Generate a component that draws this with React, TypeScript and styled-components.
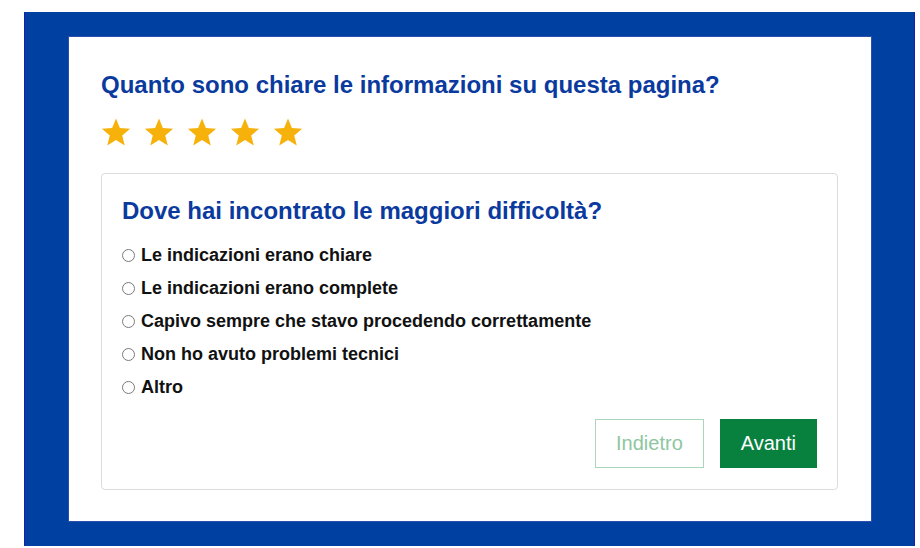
import React, { useState } from 'react';
import styled, { createGlobalStyle } from 'styled-components';

const GlobalStyle = createGlobalStyle`
  body {
    margin: 0;
    background: #ffffff;
    font-family: 'Liberation Sans', Arial, sans-serif;
  }
`;

const Page = styled.div`
  padding: 12px 0 0 24px;
`;

const Frame = styled.section`
  box-sizing: border-box;
  width: 891px;
  height: 534px;
  padding: 24px 42px 24px 43px;
  background: #0040a0;
  border-left: 1px solid #1b1bb0;
  border-right: 1px solid #1b1bb0;
`;

const Panel = styled.div`
  box-sizing: border-box;
  height: 100%;
  padding: 30px 33px 31px 32px;
  background: #ffffff;
  border: 1px solid #2a4fae;
  display: flex;
  flex-direction: column;
`;

const Title = styled.h2`
  margin: 0;
  color: #0b3a9e;
  font-size: 24px;
  font-weight: 700;
  line-height: 36px;
`;

const Stars = styled.div`
  display: flex;
  gap: 13px;
  margin: 14px 0 26px;
`;

const StarButton = styled.button`
  padding: 0;
  border: 0;
  background: none;
  width: 30px;
  height: 30px;
  cursor: pointer;
  display: flex;
`;

const Card = styled.div`
  flex: 1;
  border: 1px solid #dcdcdc;
  border-radius: 4px;
  padding: 19px 20px 21px 20px;
  display: flex;
  flex-direction: column;
`;

const Options = styled.div`
  display: flex;
  flex-direction: column;
  margin-top: 10px;
`;

const Option = styled.label`
  display: flex;
  align-items: center;
  gap: 6px;
  height: 33px;
  font-size: 18px;
  font-weight: 700;
  color: #111111;
  cursor: pointer;
`;

const Radio = styled.input`
  appearance: none;
  margin: 0;
  width: 13px;
  height: 13px;
  border: 1px solid #7a7a7a;
  border-radius: 50%;
  background: #ffffff;
  &:checked {
    box-shadow: inset 0 0 0 3px #ffffff;
    background: #0b3a9e;
  }
`;

const Actions = styled.div`
  display: flex;
  justify-content: flex-end;
  gap: 16px;
  margin-top: auto;
`;

const Button = styled.button<{ $primary?: boolean }>`
  box-sizing: border-box;
  height: 49px;
  padding: 0 20px;
  font-family: 'Liberation Sans', Arial, sans-serif;
  font-size: 20px;
  border-radius: 0;
  cursor: pointer;
  border: 1px solid ${(p) => (p.$primary ? '#08813f' : '#a9d6b8')};
  background: ${(p) => (p.$primary ? '#08813f' : '#ffffff')};
  color: ${(p) => (p.$primary ? '#ffffff' : '#8ec6a1')};
`;

const options = [
  'Le indicazioni erano chiare',
  'Le indicazioni erano complete',
  'Capivo sempre che stavo procedendo correttamente',
  'Non ho avuto problemi tecnici',
  'Altro',
];

const Star = () => (
  <svg width="30" height="30" viewBox="0 0 24 24">
    <path
      d="M12 1.2l3.1 7.6 8.2.6-6.3 5.3 2 8-7-4.4-7 4.4 2-8L.7 9.4l8.2-.6z"
      fill="#f7b10b"
    />
  </svg>
);

export default function App() {
  const [choice, setChoice] = useState<string | null>(null);

  return (
    <Page>
      <GlobalStyle />
      <Frame>
        <Panel>
          <Title>Quanto sono chiare le informazioni su questa pagina?</Title>
          <Stars>
            {[1, 2, 3, 4, 5].map((n) => (
              <StarButton key={n} aria-label={`${n} stelle`}>
                <Star />
              </StarButton>
            ))}
          </Stars>
          <Card>
            <Title>Dove hai incontrato le maggiori difficoltà?</Title>
            <Options>
              {options.map((o) => (
                <Option key={o}>
                  <Radio
                    type="radio"
                    name="difficolta"
                    checked={choice === o}
                    onChange={() => setChoice(o)}
                  />
                  {o}
                </Option>
              ))}
            </Options>
            <Actions>
              <Button>Indietro</Button>
              <Button $primary>Avanti</Button>
            </Actions>
          </Card>
        </Panel>
      </Frame>
    </Page>
  );
}
